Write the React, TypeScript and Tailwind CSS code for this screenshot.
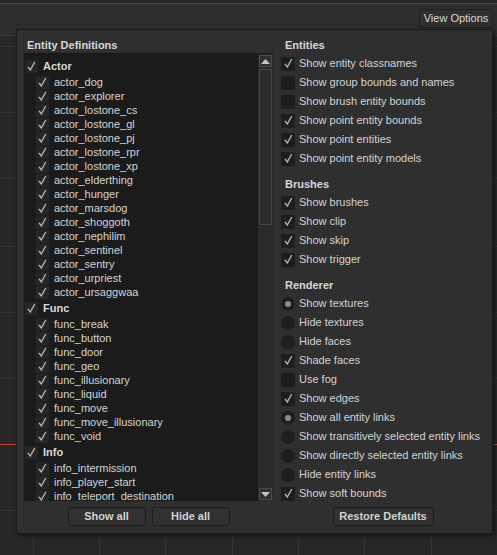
import React from "react";

const actors = [
  "actor_dog",
  "actor_explorer",
  "actor_lostone_cs",
  "actor_lostone_gl",
  "actor_lostone_pj",
  "actor_lostone_rpr",
  "actor_lostone_xp",
  "actor_elderthing",
  "actor_hunger",
  "actor_marsdog",
  "actor_shoggoth",
  "actor_nephilim",
  "actor_sentinel",
  "actor_sentry",
  "actor_urpriest",
  "actor_ursaggwaa",
];

const funcs = [
  "func_break",
  "func_button",
  "func_door",
  "func_geo",
  "func_illusionary",
  "func_liquid",
  "func_move",
  "func_move_illusionary",
  "func_void",
];

const infos = ["info_intermission", "info_player_start", "info_teleport_destination"];

const groups = [
  { name: "Actor", items: actors },
  { name: "Func", items: funcs },
  { name: "Info", items: infos },
];

type Opt = { label: string; kind: "check" | "radio"; on: boolean };

const sections: { title: string; opts: Opt[] }[] = [
  {
    title: "Entities",
    opts: [
      { label: "Show entity classnames", kind: "check", on: true },
      { label: "Show group bounds and names", kind: "check", on: false },
      { label: "Show brush entity bounds", kind: "check", on: false },
      { label: "Show point entity bounds", kind: "check", on: true },
      { label: "Show point entities", kind: "check", on: true },
      { label: "Show point entity models", kind: "check", on: true },
    ],
  },
  {
    title: "Brushes",
    opts: [
      { label: "Show brushes", kind: "check", on: true },
      { label: "Show clip", kind: "check", on: true },
      { label: "Show skip", kind: "check", on: true },
      { label: "Show trigger", kind: "check", on: true },
    ],
  },
  {
    title: "Renderer",
    opts: [
      { label: "Show textures", kind: "radio", on: true },
      { label: "Hide textures", kind: "radio", on: false },
      { label: "Hide faces", kind: "radio", on: false },
      { label: "Shade faces", kind: "check", on: true },
      { label: "Use fog", kind: "check", on: false },
      { label: "Show edges", kind: "check", on: true },
      { label: "Show all entity links", kind: "radio", on: true },
      { label: "Show transitively selected entity links", kind: "radio", on: false },
      { label: "Show directly selected entity links", kind: "radio", on: false },
      { label: "Hide entity links", kind: "radio", on: false },
      { label: "Show soft bounds", kind: "check", on: true },
    ],
  },
];

function CheckBox({ on, inList }: { on: boolean; inList?: boolean }) {
  return (
    <div
      className={
        inList
          ? "w-[13px] h-[13px] shrink-0 bg-[#262626] flex items-center justify-center"
          : "w-[14px] h-[14px] shrink-0 bg-[#1e1e1e] flex items-center justify-center"
      }
    >
      {on && (
        <svg width="13" height="13" viewBox="0 0 13 13">
          <path d="M3 6.8 L5.3 10 L9.8 2" fill="none" stroke="#b4b4b4" strokeWidth="1.4" />
        </svg>
      )}
    </div>
  );
}

function Radio({ on }: { on: boolean }) {
  return (
    <div className="w-[14px] h-[14px] shrink-0 rounded-full bg-[#1e1e1e] flex items-center justify-center">
      {on && <div className="w-[6px] h-[6px] rounded-full bg-[#8a8a8a]" />}
    </div>
  );
}

function Background() {
  const xs = [33, 99, 165, 232, 298, 364, 431];
  const ys = [46, 112, 178, 246, 312, 378, 510];
  return (
    <svg className="absolute inset-0" width="497" height="555">
      {xs.map((x) => (
        <line key={"x" + x} x1={x + 0.5} y1={33} x2={x + 0.5} y2={555} stroke="#353535" />
      ))}
      {ys.map((y) => (
        <line key={"y" + y} x1={0} y1={y + 0.5} x2={497} y2={y + 0.5} stroke="#353535" />
      ))}
      <line x1={0} y1={444.5} x2={497} y2={444.5} stroke="#c8452a" />
    </svg>
  );
}

function Btn({ label, w }: { label: string; w: string }) {
  return (
    <div
      className={`${w} h-[19px] flex items-center justify-center rounded-[3px] border border-[#1c1c1c] bg-[#313131] font-bold text-[#d2d2d2]`}
    >
      {label}
    </div>
  );
}

export default function App() {
  return (
    <div
      className="relative w-[497px] h-[555px] overflow-hidden bg-[#272727] text-[11px] text-[#d4d4d4]"
      style={{ fontFamily: '"Liberation Sans", Arial, sans-serif' }}
    >
      <Background />

      {/* toolbar */}
      <div className="relative h-[33px] bg-[#2e2e2e] border-t border-t-[#4c4c4c] border-b border-b-[#3a3a3a] mt-[3px] flex justify-end pr-[4px] pt-[5px]">
        <div className="w-[74px] h-[19px] flex items-center justify-center rounded-[3px] border border-[#1f1f1f] bg-[#2f2f2f] text-[#d8d8d8]">
          View Options
        </div>
      </div>

      {/* popup panel */}
      <div className="absolute left-[16px] top-[29px] w-[477px] h-[505px] bg-[#2f2f2f] border border-[#1a1a1a] shadow-[2px_2px_4px_rgba(0,0,0,0.5)] px-[7px] pt-[7px]">
        <div className="grid grid-cols-[249px_204px] gap-x-[8px]">
          {/* left column */}
          <div className="flex flex-col">
            <div className="h-[16px] leading-[16px] pl-[3px] font-bold text-[#d8d8d8]">Entity Definitions</div>
            <div className="h-[448px] flex bg-[#1b1b1b] border-t border-t-[#161616]">
              <div className="flex-1 overflow-hidden pt-[3px]">
                {groups.map((g) => (
                  <div key={g.name}>
                    <div className="h-[18px] flex items-center gap-[5px] pl-[1px]">
                      <CheckBox on inList />
                      <span className="font-bold text-[#d8d8d8]">{g.name}</span>
                    </div>
                    {g.items.map((it) => (
                      <div key={it} className="h-[14px] flex items-center gap-[5px] pl-[12px] whitespace-nowrap">
                        <CheckBox on inList />
                        <span>{it}</span>
                      </div>
                    ))}
                  </div>
                ))}
              </div>
              <div className="w-[15px] bg-[#2a2a2a] flex flex-col px-[1px] pt-[1px] pb-[1px]">
                <div className="h-[12px] border border-[#4a4a4a] bg-[#303030] flex items-center justify-center">
                  <svg width="9" height="5" viewBox="0 0 9 5">
                    <polygon points="0,5 9,5 4.5,0" fill="#c4c4c4" />
                  </svg>
                </div>
                <div className="mt-[2px] h-[156px] border border-[#474747] bg-[#2c2c2c]" />
                <div className="flex-1" />
                <div className="h-[12px] border border-[#4a4a4a] bg-[#303030] flex items-center justify-center">
                  <svg width="9" height="5" viewBox="0 0 9 5">
                    <polygon points="0,0 9,0 4.5,5" fill="#c4c4c4" />
                  </svg>
                </div>
              </div>
            </div>
            <div className="mt-[6px] flex justify-center gap-[6px]">
              <Btn label="Show all" w="w-[78px]" />
              <Btn label="Hide all" w="w-[78px]" />
            </div>
          </div>

          {/* right column */}
          <div className="flex flex-col">
            {sections.map((s, i) => (
              <div key={s.title} className={i > 0 ? "mt-[8px]" : ""}>
                <div className="h-[17px] leading-[16px] pl-[4px] font-bold text-[#d8d8d8]">{s.title}</div>
                {s.opts.map((o) => (
                  <div key={o.label} className="h-[19px] flex items-center gap-[4px] whitespace-nowrap">
                    {o.kind === "check" ? <CheckBox on={o.on} /> : <Radio on={o.on} />}
                    <span>{o.label}</span>
                  </div>
                ))}
              </div>
            ))}
            <div className="mt-[4px] flex justify-center">
              <Btn label="Restore Defaults" w="w-[101px]" />
            </div>
          </div>
        </div>
      </div>
    </div>
  );
}
